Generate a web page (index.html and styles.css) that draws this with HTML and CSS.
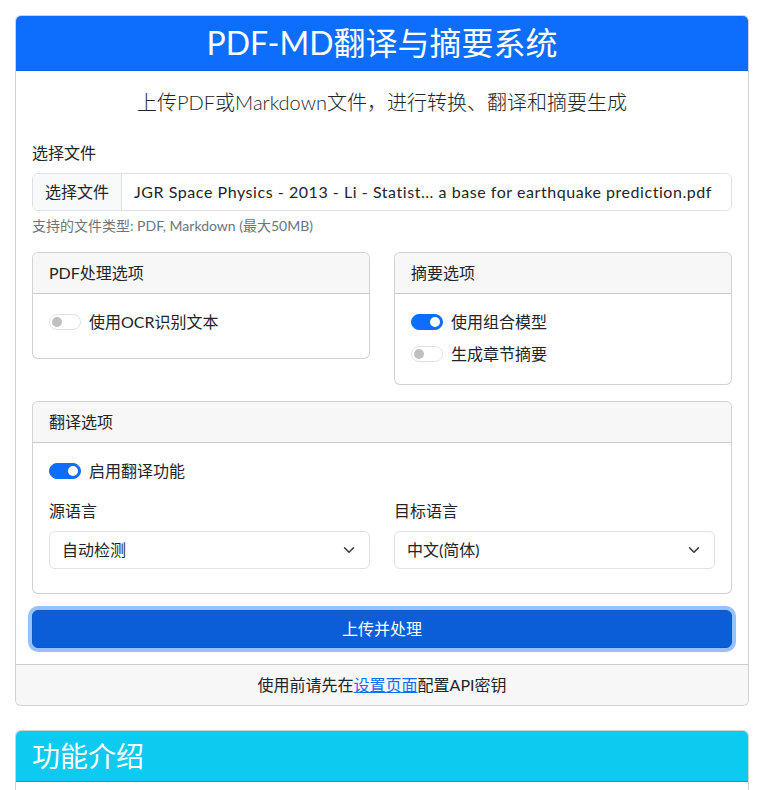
FILE: index.html
```html
<!DOCTYPE html>
<html lang="zh-CN">
<head>
<meta charset="utf-8">
<title>PDF-MD翻译与摘要系统</title>
<link rel="stylesheet" href="styles.css">
</head>
<body>
<div class="page">
  <div class="card main-card">
    <div class="card-header header-primary">
      <h2 class="title">PDF-MD翻译与摘要系统</h2>
    </div>
    <div class="card-body">
      <p class="lead">上传PDF或Markdown文件，进行转换、翻译和摘要生成</p>

      <div class="field">
        <label class="form-label">选择文件</label>
        <div class="file-input">
          <span class="file-btn">选择文件</span>
          <span class="file-name">JGR Space Physics - 2013 - Li - Statist... a base for earthquake prediction.pdf</span>
        </div>
        <div class="form-text">支持的文件类型: PDF, Markdown (最大50MB)</div>
      </div>

      <div class="opt-row">
        <div class="card sub-card">
          <div class="card-header">PDF处理选项</div>
          <div class="card-body">
            <div class="form-check mb-8">
              <span class="switch"></span>
              <span class="check-label">使用OCR识别文本</span>
            </div>
          </div>
        </div>
        <div class="card sub-card">
          <div class="card-header">摘要选项</div>
          <div class="card-body">
            <div class="form-check mb-8">
              <span class="switch on"></span>
              <span class="check-label">使用组合模型</span>
            </div>
            <div class="form-check mb-2">
              <span class="switch"></span>
              <span class="check-label">生成章节摘要</span>
            </div>
          </div>
        </div>
      </div>

      <div class="card sub-card translate-card">
        <div class="card-header">翻译选项</div>
        <div class="card-body">
          <div class="form-check mb-16">
            <span class="switch on"></span>
            <span class="check-label">启用翻译功能</span>
          </div>
          <div class="lang-row">
            <div class="lang-col">
              <label class="form-label">源语言</label>
              <div class="form-select">
                <span>自动检测</span>
                <svg class="chev" width="12" height="12" viewBox="0 0 16 16"><path d="m2 5 6 6 6-6" fill="none" stroke="#343a40" stroke-width="2" stroke-linecap="round" stroke-linejoin="round"/></svg>
              </div>
            </div>
            <div class="lang-col">
              <label class="form-label">目标语言</label>
              <div class="form-select">
                <span>中文(简体)</span>
                <svg class="chev" width="12" height="12" viewBox="0 0 16 16"><path d="m2 5 6 6 6-6" fill="none" stroke="#343a40" stroke-width="2" stroke-linecap="round" stroke-linejoin="round"/></svg>
              </div>
            </div>
          </div>
        </div>
      </div>

      <button class="btn-submit" type="button">上传并处理</button>
    </div>
    <div class="card-footer">使用前请先在<a href="#" class="link">设置页面</a>配置API密钥</div>
  </div>

  <div class="card info-card">
    <div class="card-header header-info">
      <h3 class="info-title">功能介绍</h3>
    </div>
    <div class="card-body info-body"></div>
  </div>
</div>
</body>
</html>
```
FILE: styles.css
```css
* { box-sizing: border-box; }

html, body {
  margin: 0;
  padding: 0;
  background: #fff;
}

body {
  font-family: "Lato", "Noto Sans CJK SC", sans-serif;
  font-size: 16px;
  line-height: 1.5;
  color: #212529;
}

.page {
  padding: 15px 20px 0 15px;
}

.card {
  border: 1px solid rgba(0, 0, 0, 0.175);
  border-radius: 6px;
  background: #fff;
  overflow: hidden;
}

.card-header {
  padding: 8px 16px;
  background: #f7f7f8;
  border-bottom: 1px solid rgba(0, 0, 0, 0.175);
  line-height: 24px;
}

.card-body {
  padding: 16px;
}

.card-footer {
  padding: 8px 16px;
  background: #f7f7f7;
  border-top: 1px solid rgba(0, 0, 0, 0.175);
  text-align: center;
  line-height: 24px;
}

.main-card {
  margin-bottom: 24px;
}

.header-primary {
  background: #0d6efd;
  color: #fff;
  text-align: center;
  border-bottom-color: rgba(0, 0, 0, 0.1);
}

.title {
  margin: 0;
  font-size: 32px;
  line-height: 38px;
  font-weight: 400;
}

.lead {
  margin: 0 0 24px;
  text-align: center;
  font-size: 20px;
  font-weight: 300;
  line-height: 30px;
}

.field {
  margin-bottom: 16px;
}

.form-label {
  display: block;
  margin-bottom: 8px;
  line-height: 24px;
}

.file-input {
  display: flex;
  height: 38px;
  border: 1px solid #dee2e6;
  border-radius: 6px;
  overflow: hidden;
  line-height: 24px;
}

.file-btn {
  padding: 6px 12px;
  background: #f8f9fa;
  border-right: 1px solid #dee2e6;
  flex: none;
}

.file-name {
  padding: 6px 12px;
  white-space: nowrap;
  overflow: hidden;
  text-overflow: ellipsis;
  min-width: 0;
  letter-spacing: 0.55px;
}

.form-text {
  margin-top: 4px;
  font-size: 14px;
  line-height: 21px;
  color: #6c757d;
}

.opt-row {
  display: grid;
  grid-template-columns: 1fr 1fr;
  column-gap: 24px;
  align-items: start;
  margin-bottom: 16px;
}

.form-check {
  display: flex;
  align-items: center;
  padding-left: 0;
  line-height: 24px;
  min-height: 24px;
}

.mb-8 { margin-bottom: 8px; }
.mb-2 { margin-bottom: 2px; }
.mb-16 { margin-bottom: 16px; }

.switch {
  position: relative;
  width: 32px;
  height: 16px;
  border: 1px solid #dee2e6;
  border-radius: 8px;
  background: #fff;
  margin-right: 8px;
  flex: none;
}

.switch::after {
  content: "";
  position: absolute;
  top: 2px;
  left: 2px;
  width: 10px;
  height: 10px;
  border-radius: 50%;
  background: #bfc0c1;
}

.switch.on {
  background: #0d6efd;
  border-color: #0d6efd;
}

.switch.on::after {
  left: auto;
  right: 2px;
  background: #fff;
}

.translate-card {
  margin-bottom: 16px;
}

.lang-row {
  display: grid;
  grid-template-columns: 1fr 1fr;
  column-gap: 24px;
  margin-bottom: 8px;
}

.form-select {
  display: flex;
  align-items: center;
  justify-content: space-between;
  height: 38px;
  padding: 6px 14px 6px 12px;
  border: 1px solid #dee2e6;
  border-radius: 6px;
  background: #fff;
  line-height: 24px;
}

.chev {
  display: block;
  flex: none;
}

.btn-submit {
  display: block;
  width: 100%;
  height: 38px;
  padding: 6px 12px;
  border: 1px solid #0a58ca;
  border-radius: 6px;
  background: #0b5ed7;
  color: #fff;
  font-family: inherit;
  font-size: 16px;
  line-height: 24px;
  box-shadow: 0 0 0 4px rgba(49, 132, 253, 0.5);
  cursor: pointer;
}

.link {
  color: #0d6efd;
  text-decoration: underline;
}

.header-info {
  background: #0dcaf0;
  color: #fff;
  border-bottom: 1px solid #0aa2c0;
}

.info-title {
  margin: 0;
  font-size: 28px;
  line-height: 34px;
  font-weight: 400;
}

.info-body {
  min-height: 60px;
}
```
